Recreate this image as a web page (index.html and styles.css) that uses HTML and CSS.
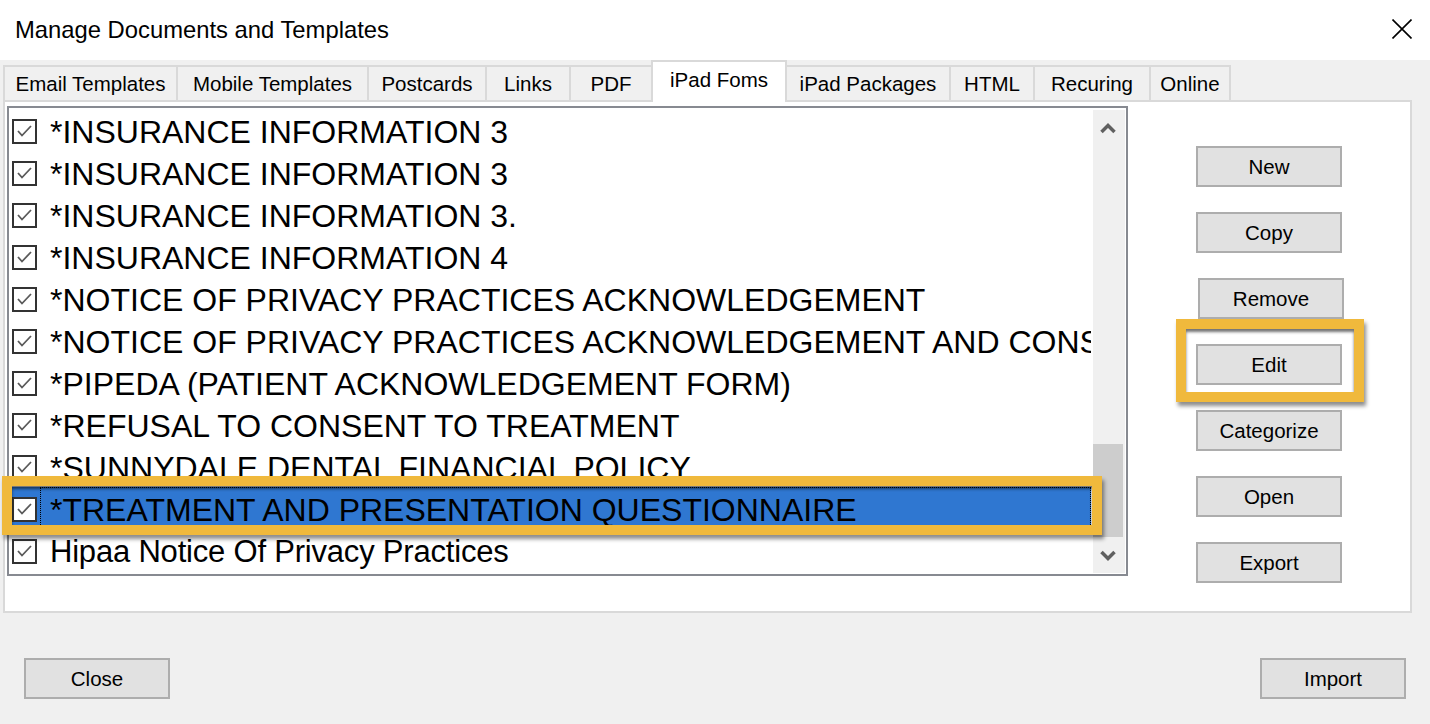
FILE: index.html
```html
<!DOCTYPE html>
<html lang="en">
<head>
<meta charset="utf-8">
<title>Manage Documents and Templates</title>
<link rel="stylesheet" href="styles.css">
</head>
<body>
<div class="window">
  <div class="titlebar">
    <span class="title">Manage Documents and Templates</span>
    <svg class="close-x" width="20" height="20" viewBox="0 0 20 20"><path d="M0.5 0.5 L19.5 19.5 M19.5 0.5 L0.5 19.5" stroke="#000" stroke-width="1.6" fill="none"/></svg>
  </div>
  <div class="tabs">
    <div class="tab first">Email Templates</div>
    <div class="tab">Mobile Templates</div>
    <div class="tab">Postcards</div>
    <div class="tab">Links</div>
    <div class="tab">PDF</div>
    <div class="tab active">iPad Foms</div>
    <div class="tab">iPad Packages</div>
    <div class="tab">HTML</div>
    <div class="tab">Recuring</div>
    <div class="tab">Online</div>
  </div>
  <div class="panel">
    <div class="listbox">
      <div class="rows">
        <div class="row"><span class="cb"><svg viewBox="0 0 21 21"><polyline points="4,10 8,14.5 17,5" /></svg></span><span class="label">*INSURANCE INFORMATION 3</span></div>
        <div class="row"><span class="cb"><svg viewBox="0 0 21 21"><polyline points="4,10 8,14.5 17,5" /></svg></span><span class="label">*INSURANCE INFORMATION 3</span></div>
        <div class="row"><span class="cb"><svg viewBox="0 0 21 21"><polyline points="4,10 8,14.5 17,5" /></svg></span><span class="label">*INSURANCE INFORMATION 3.</span></div>
        <div class="row"><span class="cb"><svg viewBox="0 0 21 21"><polyline points="4,10 8,14.5 17,5" /></svg></span><span class="label">*INSURANCE INFORMATION 4</span></div>
        <div class="row"><span class="cb"><svg viewBox="0 0 21 21"><polyline points="4,10 8,14.5 17,5" /></svg></span><span class="label">*NOTICE OF PRIVACY PRACTICES ACKNOWLEDGEMENT</span></div>
        <div class="row"><span class="cb"><svg viewBox="0 0 21 21"><polyline points="4,10 8,14.5 17,5" /></svg></span><span class="label">*NOTICE OF PRIVACY PRACTICES ACKNOWLEDGEMENT AND CONSENT</span></div>
        <div class="row"><span class="cb"><svg viewBox="0 0 21 21"><polyline points="4,10 8,14.5 17,5" /></svg></span><span class="label">*PIPEDA (PATIENT ACKNOWLEDGEMENT FORM)</span></div>
        <div class="row"><span class="cb"><svg viewBox="0 0 21 21"><polyline points="4,10 8,14.5 17,5" /></svg></span><span class="label">*REFUSAL TO CONSENT TO TREATMENT</span></div>
        <div class="row"><span class="cb"><svg viewBox="0 0 21 21"><polyline points="4,10 8,14.5 17,5" /></svg></span><span class="label">*SUNNYDALE DENTAL FINANCIAL POLICY</span></div>
        <div class="row selected"><span class="cb"><svg viewBox="0 0 21 21"><polyline points="4,10 8,14.5 17,5" /></svg></span><span class="label focus">*TREATMENT AND PRESENTATION QUESTIONNAIRE</span><div class="callout callout-row"></div></div>
        <div class="row"><span class="cb"><svg viewBox="0 0 21 21"><polyline points="4,10 8,14.5 17,5" /></svg></span><span class="label mixed">Hipaa Notice Of Privacy Practices</span></div>
      </div>
      <div class="scrollbar">
        <div class="sb-btn"><svg width="16" height="12" viewBox="0 0 16 12"><polyline points="1.5,10 8,3.5 14.5,10" /></svg></div>
        <div class="sb-track"><div class="sb-thumb"></div></div>
        <div class="sb-btn sb-down"><svg width="16" height="12" viewBox="0 0 16 12"><polyline points="1.5,2 8,8.5 14.5,2" /></svg></div>
      </div>
    </div>
    <div class="actions">
      <div class="btn">New</div>
      <div class="btn">Copy</div>
      <div class="btn btn-shift">Remove</div>
      <div class="btn-wrap"><div class="btn">Edit</div><div class="callout callout-btn"></div></div>
      <div class="btn">Categorize</div>
      <div class="btn">Open</div>
      <div class="btn">Export</div>
    </div>
  </div>
  <div class="footer">
    <div class="btn">Close</div>
    <div class="btn">Import</div>
  </div>
</div>
</body>
</html>
```
FILE: styles.css
```css
* { box-sizing: border-box; }
html, body { margin: 0; padding: 0; }
body {
  background: #f0f0f0;
  font-family: "Liberation Sans", Arial, sans-serif;
  color: #000;
  width: 1430px;
  height: 724px;
  overflow: hidden;
}
.window { width: 1430px; height: 724px; }

.titlebar {
  height: 60px;
  background: #fff;
  display: flex;
  align-items: center;
  justify-content: space-between;
  padding: 0 18px 0 15px;
}
.title { font-size: 23.8px; }
.close-x { display: block; margin-top: -2px; }

.tabs {
  height: 40px;
  padding-left: 3px;
  display: grid;
  grid-template-columns: 175px 191px 118px 84px 82px 134px 164px 84px 116px 80px;
  align-items: end;
}
.tab {
  height: 35px;
  border-top: 2px solid #d9d9d9;
  border-right: 2px solid #d9d9d9;
  background: #f0f0f0;
  font-size: 20.5px;
  display: flex;
  align-items: center;
  justify-content: center;
  white-space: nowrap;
}
.tab.first { border-left: 2px solid #d9d9d9; }
.tab.active {
  height: 42px;
  margin-bottom: -2px;
  margin-left: -2px;
  border-left: 2px solid #d9d9d9;
  background: #fff;
  position: relative;
  z-index: 2;
  padding-bottom: 4px;
}

.panel {
  height: 513px;
  margin: 0 18px 0 3px;
  border: 2px solid #d9d9d9;
  background: #fff;
  display: flex;
  align-items: flex-start;
}

.listbox {
  width: 1121px;
  height: 470px;
  margin: 4px 0 0 2px;
  border: 2px solid #878a91;
  display: flex;
  flex: none;
}
.rows {
  flex: 1;
  min-width: 0;
  padding: 1px 2px 0 3px;
}
.row {
  height: 42px;
  display: flex;
  align-items: center;
  position: relative;
}
.cb {
  width: 25px;
  height: 25px;
  flex: none;
  border: 2px solid #333;
  background: #fff;
  margin-top: 2px;
  display: block;
}
.cb svg { display: block; width: 21px; height: 21px; }
.cb polyline { fill: none; stroke: #5a5a5a; stroke-width: 1.8; }
.label {
  flex: 1;
  min-width: 0;
  margin-left: 3px;
  padding-left: 10px;
  padding-top: 4px;
  font-size: 32px;
  line-height: 38px;
  height: 42px;
  white-space: nowrap;
  overflow: hidden;
}
.label.mixed { font-size: 31px; letter-spacing: -0.2px; }
.row.selected { background: #2f77d1; }
.label.focus { outline: 1px dotted #000; outline-offset: -1px; }

.callout {
  position: absolute;
  z-index: 5;
  border: 10px solid #f0b93c;
  box-shadow: 2px 4px 4px rgba(0, 0, 0, 0.45), inset 0 3px 3px rgba(0, 0, 0, 0.55);
  pointer-events: none;
}
.callout-row { left: -10px; top: -11px; width: 1100px; height: 59px; }

.scrollbar {
  width: 32px;
  flex: none;
  margin: 2px 1px 1px 0;
  background: #f0f0f0;
  display: flex;
  flex-direction: column;
}
.sb-btn {
  height: 36px;
  display: flex;
  align-items: center;
  justify-content: center;
  padding-right: 2px;
}
.sb-btn.sb-down { height: 35px; }
.sb-btn polyline { fill: none; stroke: #606060; stroke-width: 3.5; stroke-linejoin: miter; }
.sb-track { flex: 1; }
.sb-thumb { margin-top: 298px; height: 93px; width: 30px; background: #cdcdcd; }

.actions {
  margin: 44px 0 0 68px;
  display: flex;
  flex-direction: column;
  gap: 25px;
}
.btn {
  width: 146px;
  height: 41px;
  background: #e1e1e1;
  border: 2px solid #adadad;
  font-size: 20.5px;
  display: flex;
  align-items: center;
  justify-content: center;
}
.btn-shift { margin-left: 2px; }
.btn-wrap { position: relative; }
.callout-btn { left: -20px; top: -25px; width: 188px; height: 83px; }

.footer {
  display: flex;
  justify-content: space-between;
  padding: 45px 24px 0 24px;
}
```
